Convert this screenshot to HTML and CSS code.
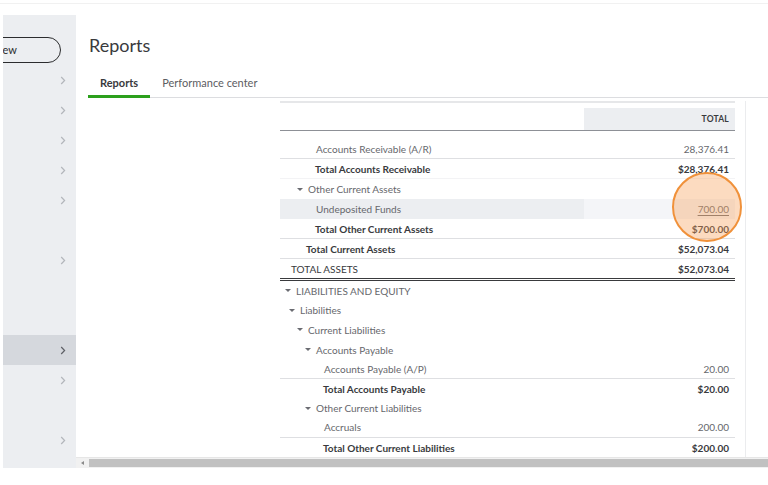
FILE: index.html
```html
<!DOCTYPE html>
<html>
<head>
<meta charset="utf-8">
<link rel="stylesheet" href="styles.css">
</head>
<body>
<div class="page">
  <div class="topbar"></div>
  <div class="app">
    <nav class="sidebar">
      <div class="pill">ew</div>
      <div class="nav-item"><svg class="chev" viewBox="0 0 6 9"><path d="M1.2 1 L4.6 4.5 L1.2 8"/></svg></div>
      <div class="nav-item"><svg class="chev" viewBox="0 0 6 9"><path d="M1.2 1 L4.6 4.5 L1.2 8"/></svg></div>
      <div class="nav-item"><svg class="chev" viewBox="0 0 6 9"><path d="M1.2 1 L4.6 4.5 L1.2 8"/></svg></div>
      <div class="nav-item"><svg class="chev" viewBox="0 0 6 9"><path d="M1.2 1 L4.6 4.5 L1.2 8"/></svg></div>
      <div class="nav-item"><svg class="chev" viewBox="0 0 6 9"><path d="M1.2 1 L4.6 4.5 L1.2 8"/></svg></div>
      <div class="nav-item"></div>
      <div class="nav-item"><svg class="chev" viewBox="0 0 6 9"><path d="M1.2 1 L4.6 4.5 L1.2 8"/></svg></div>
      <div class="nav-item"></div>
      <div class="nav-item"></div>
      <div class="nav-item active"><svg class="chev" viewBox="0 0 6 9"><path d="M1.2 1 L4.6 4.5 L1.2 8"/></svg></div>
      <div class="nav-item"><svg class="chev" viewBox="0 0 6 9"><path d="M1.2 1 L4.6 4.5 L1.2 8"/></svg></div>
      <div class="nav-item"></div>
      <div class="nav-item"><svg class="chev" viewBox="0 0 6 9"><path d="M1.2 1 L4.6 4.5 L1.2 8"/></svg></div>
    </nav>
    <main class="main">
      <header class="header">
        <h1 class="title">Reports</h1>
        <div class="tabs">
          <div class="tab active">Reports</div>
          <div class="tab">Performance center</div>
        </div>
      </header>
      <section class="content">
        <div class="panel">
          <div class="report">
            <div class="report-top"></div>
            <div class="head-row">
              <div class="label-cell"></div>
              <div class="value-cell head">TOTAL</div>
            </div>
            <div class="spacer"></div>
            <div class="row line"><div class="label-cell i36">Accounts Receivable (A/R)</div><div class="value-cell">28,376.41</div></div>
            <div class="row bold faint"><div class="label-cell i35">Total Accounts Receivable</div><div class="value-cell">$28,376.41</div></div>
            <div class="row"><div class="label-cell i17"><span class="caret"></span>Other Current Assets</div><div class="value-cell"></div></div>
            <div class="row hl"><div class="label-cell i36">Undeposited Funds</div><div class="value-cell"><span class="link">700.00</span></div></div>
            <div class="row bold line"><div class="label-cell i35">Total Other Current Assets</div><div class="value-cell">$700.00</div></div>
            <div class="row bold line"><div class="label-cell i26">Total Current Assets</div><div class="value-cell">$52,073.04</div></div>
            <div class="row bold double upper"><div class="label-cell i11">TOTAL ASSETS</div><div class="value-cell">$52,073.04</div></div>
            <div class="row sm"><div class="label-cell i5"><span class="caret"></span>LIABILITIES AND EQUITY</div><div class="value-cell"></div></div>
            <div class="row sm"><div class="label-cell i9"><span class="caret"></span>Liabilities</div><div class="value-cell"></div></div>
            <div class="row sm"><div class="label-cell i17"><span class="caret"></span>Current Liabilities</div><div class="value-cell"></div></div>
            <div class="row sm"><div class="label-cell i25"><span class="caret"></span>Accounts Payable</div><div class="value-cell"></div></div>
            <div class="row sm line"><div class="label-cell i44">Accounts Payable (A/P)</div><div class="value-cell">20.00</div></div>
            <div class="row sm bold"><div class="label-cell i43">Total Accounts Payable</div><div class="value-cell">$20.00</div></div>
            <div class="row sm"><div class="label-cell i25"><span class="caret"></span>Other Current Liabilities</div><div class="value-cell"></div></div>
            <div class="row sm line"><div class="label-cell i44">Accruals</div><div class="value-cell">200.00</div></div>
            <div class="row sm bold"><div class="label-cell i43">Total Other Current Liabilities</div><div class="value-cell">$200.00</div></div>
          </div>
        </div>
      </section>
      <div class="hscroll">
        <div class="arrow-box"><span class="arrow-left"></span></div>
        <div class="thumb"></div>
      </div>
    </main>
  </div>
  <div class="highlight-ring"></div>
</div>
</body>
</html>
```

FILE: styles.css
```css
* { box-sizing: border-box; }

html, body {
  margin: 0;
  padding: 0;
  background: #ffffff;
}

body {
  font-family: "Lato", "Noto Sans", "Liberation Sans", sans-serif;
  color: #393a3d;
  overflow: hidden;
}

.page {
  position: relative;
  width: 768px;
  height: 485px;
}

.topbar {
  height: 15px;
  border-top: 3px solid #ffffff;
  background: linear-gradient(#f1f1f1, #f1f1f1) top / 100% 1px no-repeat;
}

.app {
  display: flex;
  height: 453px;
  margin-left: 3px;
}

/* Sidebar */
.sidebar {
  width: 73px;
  background: #eceef1;
  overflow: hidden;
  display: flex;
  flex-direction: column;
}

.pill {
  flex: none;
  margin-top: 22px;
  margin-bottom: 2px;
  margin-left: -40px;
  width: 98px;
  height: 26px;
  border: 1.5px solid #2b2c2e;
  border-radius: 13px;
  padding-left: 38.5px;
  font-size: 11px;
  line-height: 23px;
  color: #2b2c2e;
}

.nav-item {
  flex: none;
  height: 30px;
  display: flex;
  align-items: center;
  justify-content: flex-end;
  padding-right: 10px;
}

.nav-item.active {
  background: #d5d8dd;
}

.chev {
  width: 6px;
  height: 9px;
  fill: none;
  stroke: #b3b6bb;
  stroke-width: 1.2;
}

.nav-item.active .chev {
  stroke: #5e6066;
}

/* Main */
.main {
  flex: 1;
  display: flex;
  flex-direction: column;
  min-width: 0;
}

.header {
  height: 84px;
  padding-left: 12px;
  padding-top: 19px;
}

.title {
  margin: 0;
  font-size: 18px;
  font-weight: 400;
  line-height: 22px;
  color: #393a3d;
  padding-left: 1px;
}

.tabs {
  display: flex;
  margin-top: 12px;
  border-bottom: 1px solid #dcdde0;
}

.tab {
  padding: 8px 12px 5px;
  font-size: 11px;
  line-height: 14px;
  color: #5c5d62;
  border-bottom: 3px solid transparent;
  margin-bottom: -1px;
}

.tab.active {
  color: #393a3d;
  font-weight: 700;
  border-bottom-color: #2ca01c;
}

.content {
  height: 358px;
  overflow: hidden;
}

.panel {
  margin-left: 203px;
  width: 467px;
  height: 100%;
  border-right: 1px solid #ebecee;
  padding-left: 1px;
}

.report {
  width: 455px;
  font-size: 10px;
}

.report-top {
  margin-top: 2px;
  height: 2px;
  background: #e6e7e9;
}

.head-row {
  display: flex;
  margin-top: 5px;
  height: 23px;
  border-bottom: 1px solid #8d9096;
}

.label-cell {
  flex: 1;
  white-space: nowrap;
  display: flex;
  align-items: center;
}

.value-cell {
  width: 151px;
  text-align: right;
  padding-right: 6px;
  display: flex;
  align-items: center;
  justify-content: flex-end;
}

.value-cell.head {
  background: #eceef1;
  font-size: 8.5px;
  font-weight: 700;
  color: #393a3d;
  letter-spacing: 0.2px;
}

.spacer {
  height: 8px;
}

.row {
  display: flex;
  height: 20px;
  color: #66676c;
}

.row.sm {
  height: 19.6px;
}

.row.bold {
  color: #393a3d;
  font-weight: 700;
}

.row.upper {
  font-weight: 400;
  color: #393a3d;
}

.row.upper .value-cell {
  font-weight: 700;
}

.row.line {
  border-bottom: 1px solid #dedfe2;
}

.row.faint {
  border-bottom: 1px solid #f3f3f5;
}

.row.double {
  height: 22px;
  border-bottom: 3px double #393a3d;
}

.row.hl .label-cell {
  background: #eceef1;
}

.row.hl .value-cell {
  background: #f4f5f8;
}

.link {
  text-decoration: underline;
  text-underline-offset: 2px;
  color: #6b6c72;
}

.caret {
  display: inline-block;
  width: 0;
  height: 0;
  border-left: 3px solid transparent;
  border-right: 3px solid transparent;
  border-top: 3.5px solid #6b6c72;
  margin-right: 5px;
}

.i5 { padding-left: 5px; }
.i9 { padding-left: 9px; }
.i11 { padding-left: 11px; }
.i17 { padding-left: 17px; }
.i25 { padding-left: 25px; }
.i26 { padding-left: 26px; }
.i35 { padding-left: 35px; }
.i36 { padding-left: 36px; }
.i43 { padding-left: 43px; }
.i44 { padding-left: 44px; }

/* Scrollbar */
.hscroll {
  height: 11px;
  display: flex;
  background: #f1f1f1;
  border-top: 1px solid #e6e6e6;
}

.arrow-box {
  width: 13px;
  display: flex;
  align-items: center;
  justify-content: center;
}

.arrow-left {
  width: 0;
  height: 0;
  border-top: 2.5px solid transparent;
  border-bottom: 2.5px solid transparent;
  border-right: 3px solid #8a8a8a;
}

.thumb {
  flex: 1;
  background: #c1c1c1;
  margin: 1px 0;
}

/* Overlay highlight */
.highlight-ring {
  position: absolute;
  left: 672px;
  top: 172px;
  width: 70px;
  height: 70px;
  border-radius: 50%;
  border: 2px solid #f0913a;
  background: rgba(248, 160, 90, 0.38);
}
```
